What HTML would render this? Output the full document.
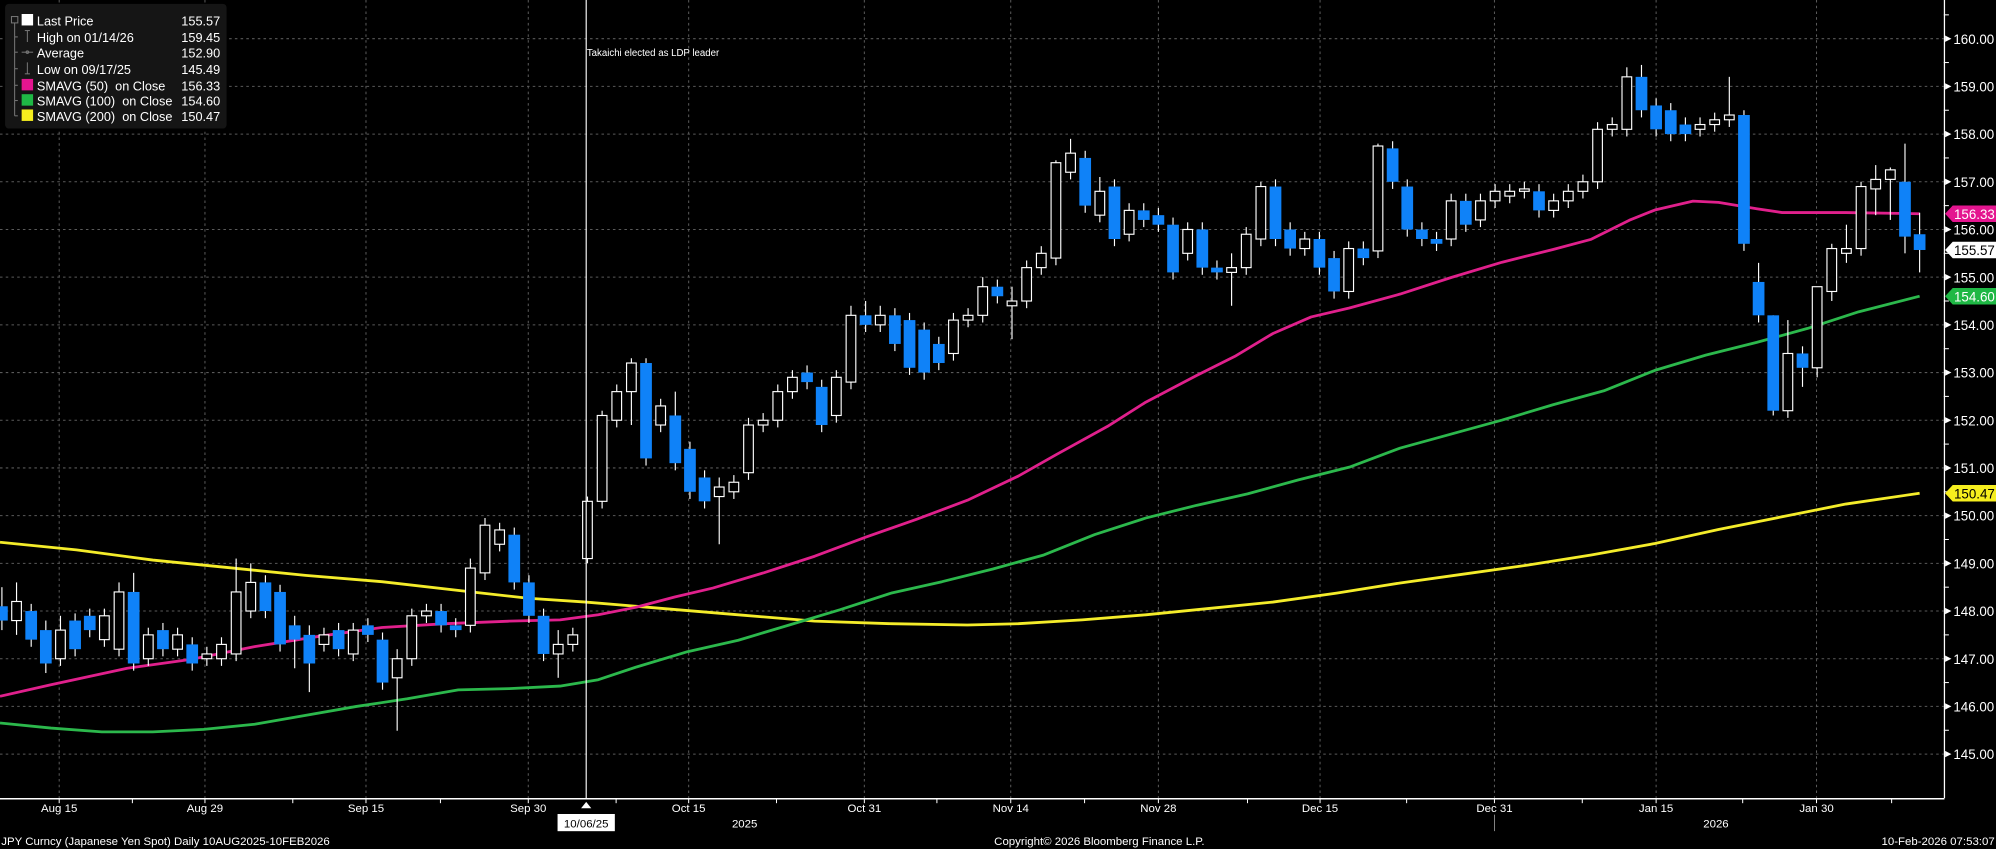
<!DOCTYPE html>
<html><head><meta charset="utf-8">
<style>
html,body{margin:0;padding:0;background:#000;width:1996px;height:849px;overflow:hidden}
svg{display:block}
text{font-family:"Liberation Sans",sans-serif;white-space:pre}
</style></head>
<body>
<svg id="c" width="1996" height="849" viewBox="0 0 1568 667" preserveAspectRatio="none" xmlns="http://www.w3.org/2000/svg">
<rect x="0" y="0" width="1568" height="667" fill="#000"/>
<g id="grid"></g>
<g id="ma"></g>
<g id="candles"></g>
<g id="axis"></g>
<rect x="4" y="3" width="174" height="98" rx="3" fill="#151515"/>
<g stroke="#777" stroke-width="0.8" fill="none">
<rect x="9" y="13" width="5" height="5"/>
<line x1="11.5" y1="18" x2="11.5" y2="91"/>
<line x1="11.5" y1="29" x2="14" y2="29"/><line x1="11.5" y1="41" x2="14" y2="41"/><line x1="11.5" y1="54" x2="14" y2="54"/><line x1="11.5" y1="67" x2="14" y2="67"/><line x1="11.5" y1="79" x2="14" y2="79"/><line x1="11.5" y1="91" x2="14" y2="91"/>
<line x1="21.5" y1="24" x2="21.5" y2="33"/><line x1="19.5" y1="24" x2="23.5" y2="24"/>
<line x1="17" y1="41" x2="26" y2="41"/><circle cx="21.5" cy="41" r="1"/>
<line x1="21.5" y1="49" x2="21.5" y2="58"/><line x1="19.5" y1="58" x2="23.5" y2="58"/>
</g>
<rect x="17" y="11" width="9" height="9" fill="#fff"/>
<rect x="17" y="62" width="9" height="9" fill="#e4158f"/>
<rect x="17" y="74" width="9" height="9" fill="#1fb845"/>
<rect x="17" y="86" width="9" height="9" fill="#f6ee1e"/>
<g fill="#fff" font-size="10">
<text x="29" y="20">Last Price</text><text x="173" y="20" text-anchor="end">155.57</text>
<text x="29" y="33">High on 01/14/26</text><text x="173" y="33" text-anchor="end">159.45</text>
<text x="29" y="45">Average</text><text x="173" y="45" text-anchor="end">152.90</text>
<text x="29" y="58">Low on 09/17/25</text><text x="173" y="58" text-anchor="end">145.49</text>
<text x="29" y="71">SMAVG (50)  on Close</text><text x="173" y="71" text-anchor="end">156.33</text>
<text x="29" y="83">SMAVG (100)  on Close</text><text x="173" y="83" text-anchor="end">154.60</text>
<text x="29" y="95">SMAVG (200)  on Close</text><text x="173" y="95" text-anchor="end">150.47</text>
</g>
<line x1="460.5" y1="0" x2="460.5" y2="627" stroke="#fff" stroke-width="0.9"/>
<text x="461" y="44" fill="#fff" font-size="7.6">Takaichi elected as LDP leader</text>
<g fill="#fff" font-size="9">
<text x="1" y="664">JPY Curncy (Japanese Yen Spot) Daily 10AUG2025-10FEB2026</text>
<text x="781" y="664">Copyright© 2026 Bloomberg Finance L.P.</text>
<text x="1567" y="664" text-anchor="end">10-Feb-2026 07:53:07</text>
</g>
</svg>
<script>
var NS="http://www.w3.org/2000/svg";
function Y(p){return 30.4+(160-p)*37.47;}
function X(i){return 1.5+11.5*i;}
function el(parent,tag,attrs,txt){var e=document.createElementNS(NS,tag);for(var k in attrs)e.setAttribute(k,attrs[k]);if(txt!=null)e.textContent=txt;document.getElementById(parent).appendChild(e);return e;}
for(var p=145;p<=160;p++){el("grid","line",{x1:0,x2:1527,y1:Y(p),y2:Y(p),stroke:"#5a5a5a","stroke-width":0.8,"stroke-dasharray":"2,2.5"});}
var vx=[46.5,161,287.5,415,541,679,794,910,1037,1174,1301,1427];
var vl=["Aug 15","Aug 29","Sep 15","Sep 30","Oct 15","Oct 31","Nov 14","Nov 28","Dec 15","Dec 31","Jan 15","Jan 30"];
vx.forEach(function(x){el("grid","line",{x1:x,x2:x,y1:0,y2:627,stroke:"#5a5a5a","stroke-width":0.8,"stroke-dasharray":"2,2.5"});});
function pl(pts,col){el("ma","polyline",{points:pts.map(function(a){return a.join(",")}).join(" "),fill:"none",stroke:col,"stroke-width":2.2,"stroke-linejoin":"round"});}
pl([[0,426],[60,432],[120,440],[180,446],[240,452],[300,457],[370,465],[415,470],[460,473],[520,478],[580,483],[640,488],[700,490],[760,491],[800,490],[850,487],[900,483],[950,478],[1000,473],[1050,466],[1100,458],[1150,451],[1200,444],[1250,436],[1300,427],[1350,416],[1400,406],[1450,396],[1508,387.5]],"#f4ec2a");
pl([[0,568],[40,572],[80,575],[120,575],[160,573],[200,569],[240,562],[280,555],[320,549],[360,542],[400,541],[440,539],[470,534],[500,524],[540,512],[580,503],[620,491],[660,479],[700,466],[740,457],[780,447],[820,436],[860,420],[900,407],[940,397],[980,388],[1020,377],[1060,367],[1100,352],[1140,341],[1180,330],[1220,318],[1260,307],[1300,291],[1340,279],[1380,269],[1420,258],[1460,245],[1508,232.7]],"#2cb84c");
pl([[0,547],[40,538],[100,525],[150,518],[200,508],[250,500],[300,493],[350,490],[400,488],[440,487],[470,483],[500,477],[530,469],[560,462],[600,450],[640,437],[680,422],[720,408],[760,393],[800,374],[830,357],[870,335],[900,316],[940,295],[970,280],[1000,262],[1030,249],[1060,242],[1100,231],[1140,218],[1180,206],[1220,196],[1250,188],[1280,173],[1300,165],[1330,158],[1350,159],[1380,164],[1400,167],[1450,167],[1508,167.9]],"#e0208c");
var D=[
[148.1,147.8,148.5,147.6],[147.8,148.2,148.6,147.5],[148.0,147.4],[147.6,146.9,147.8,146.7],[147.0,147.6,147.9],
[147.8,147.2],[147.9,147.6],[147.4,147.9],[147.2,148.4,148.6],[148.4,146.9,148.8],
[147.0,147.5],[147.6,147.2],[147.2,147.5],[147.3,146.9],[147.0,147.1],
[147.0,147.3],[147.1,148.4,149.1],[148.0,148.6,149.0],[148.6,148.0],[148.4,147.3],
[147.7,147.4,147.9,146.8],[147.5,146.9,147.7,146.3],[147.3,147.5],[147.6,147.2],[147.1,147.6],
[147.7,147.5],[147.4,146.5],[146.6,147.0,147.2,145.49],[147.0,147.9],[147.9,148.0],
[148.0,147.7],[147.7,147.6],[147.7,148.9,149.1],[148.8,149.8,149.95],[149.4,149.7],
[149.6,148.6],[148.6,147.9],[147.9,147.1],[147.1,147.3,147.6,146.6],[147.3,147.5],
[149.1,150.3,150.4,149.0],[150.3,152.1,152.2],[152.0,152.6],[152.6,153.2,153.3,151.9],[153.2,151.2,153.3],
[151.9,152.3],[152.1,151.1,152.6],[151.4,150.5],[150.8,150.3],[150.4,150.6,150.8,149.4],
[150.5,150.7],[150.9,151.9],[151.9,152.0],[152.0,152.6],[152.6,152.9],
[153.0,152.8],[152.7,151.9],[152.1,152.9],[152.8,154.2,154.4],[154.2,154.0,154.5],
[154.0,154.2,154.4],[154.2,153.6],[154.1,153.1],[153.9,153.0],[153.6,153.2],
[153.4,154.1],[154.1,154.2],[154.2,154.8,155.0],[154.8,154.6],[154.4,154.5,154.8,153.7],
[154.5,155.2],[155.2,155.5],[155.4,157.4,157.45],[157.2,157.6,157.9],[157.5,156.5],
[156.3,156.8,157.1],[156.9,155.8],[155.9,156.4],[156.4,156.2],[156.3,156.1],
[156.1,155.1],[155.5,156.0],[156.0,155.2],[155.2,155.1],[155.1,155.2,155.5,154.4],
[155.2,155.9],[155.8,156.9,157.0],[156.9,155.8],[156.0,155.6],[155.6,155.8],
[155.8,155.2],[155.4,154.7],[154.7,155.6],[155.6,155.4],[155.55,157.75,157.8],
[157.7,157.0],[156.9,156.0],[156.0,155.8],[155.8,155.7],[155.8,156.6],
[156.6,156.1],[156.2,156.6],[156.6,156.8],[156.7,156.8],[156.8,156.85],
[156.8,156.4],[156.4,156.6],[156.6,156.8],[156.8,157.0],[157.0,158.1],
[158.1,158.2],[158.1,159.2,159.4],[159.2,158.5,159.45],[158.6,158.1],[158.5,158.0],
[158.2,158.0],[158.1,158.2],[158.2,158.3],[158.3,158.4,159.2],[158.4,155.7,158.5],
[154.9,154.2,155.3],[154.2,152.2,154.2,152.1],[152.2,153.4,154.1],[153.4,153.1,153.55,152.7],[153.1,154.8,154.8,152.9],
[154.7,155.6,155.7,154.5],[155.5,155.6,156.1,155.3],[155.6,156.9,157.0],[156.85,157.05,157.35,156.3],[157.05,157.25,157.3,156.2],
[157.0,155.85,157.8,155.5],[155.9,155.57,156.35,155.1]
];
var BLUE="#0f82f8";
D.forEach(function(d,i){
 var o=d[0],c=d[1],hi=Math.max(o,c),lo=Math.min(o,c);
 var h=d[2]!=null?d[2]:hi+0.15, l=d[3]!=null?d[3]:lo-0.15;
 var x=X(i);
 el("candles","line",{x1:x,x2:x,y1:Y(h),y2:Y(l),stroke:"#fff","stroke-width":0.9});
 var yt=Y(hi),hb=Math.max(Y(lo)-yt,1.5);
 if(c<o){el("candles","rect",{x:x-4.6,y:yt,width:9.2,height:hb,fill:BLUE});}
 else{el("candles","rect",{x:x-3.8,y:yt,width:7.6,height:hb,fill:"#000",stroke:"#fff","stroke-width":0.9});}
});
el("axis","line",{x1:1527.5,x2:1527.5,y1:0,y2:627,stroke:"#fff","stroke-width":1});
el("axis","line",{x1:0,x2:1527.5,y1:627.5,y2:627.5,stroke:"#fff","stroke-width":1.2});
for(var p=145;p<=160;p++){
 var y=Y(p);
 el("axis","path",{d:"M1528 "+(y-2.5)+" L1533 "+y+" L1528 "+(y+2.5)+"Z",fill:"#fff"});
 el("axis","text",{x:1534.5,y:y+4,fill:"#fff","font-size":"10.5"},p.toFixed(2));
 var yh=Y(p+0.5); if(p<160) el("axis","line",{x1:1527,x2:1531,y1:yh,y2:yh,stroke:"#fff","stroke-width":0.8});
}
el("axis","line",{x1:1527,x2:1531,y1:Y(160.5),y2:Y(160.5),stroke:"#fff","stroke-width":0.8});
function badge(p,bg,fg,t){var y=Y(p);
 el("axis","path",{d:"M1528 "+y+" L1534 "+(y-6.5)+" L1568 "+(y-6.5)+" L1568 "+(y+6.5)+" L1534 "+(y+6.5)+"Z",fill:bg});
 el("axis","text",{x:1535,y:y+4,fill:fg,"font-size":"10.5"},t);}
badge(156.33,"#e4158f","#fff","156.33");
badge(155.57,"#fff","#000","155.57");
badge(154.60,"#1fb845","#fff","154.60");
badge(150.47,"#f6ee1e","#000","150.47");
vx.forEach(function(x,k){el("axis","line",{x1:x,x2:x,y1:627,y2:631,stroke:"#fff","stroke-width":0.8});
 el("axis","text",{x:x,y:638,fill:"#fff","font-size":"9","text-anchor":"middle"},vl[k]);});
[104,230,346,484,610,736,852,980,1105,1243,1369,1486].forEach(function(x){el("axis","line",{x1:x,x2:x,y1:627,y2:631,stroke:"#fff","stroke-width":0.8});});
el("axis","line",{x1:1174,x2:1174,y1:640,y2:653,stroke:"#aaa","stroke-width":0.6});
el("axis","text",{x:585,y:650,fill:"#fff","font-size":"9","text-anchor":"middle"},"2025");
el("axis","text",{x:1348,y:650,fill:"#fff","font-size":"9","text-anchor":"middle"},"2026");
el("axis","path",{d:"M456.5 635 L460.5 630 L464.5 635Z",fill:"#fff"});
el("axis","rect",{x:438,y:639.5,width:45,height:13.5,fill:"#fff"});
el("axis","text",{x:460.5,y:650,fill:"#000","font-size":"9","text-anchor":"middle"},"10/06/25");
</script>
</body></html>
